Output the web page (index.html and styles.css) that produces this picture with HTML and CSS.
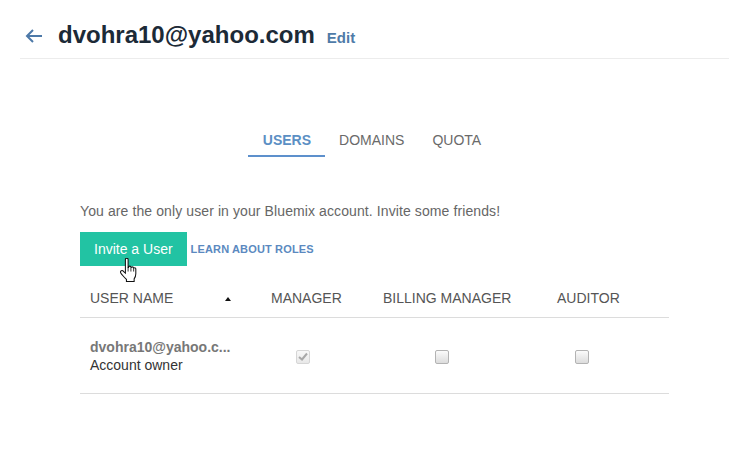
FILE: index.html
```html
<!DOCTYPE html>
<html lang="en">
<head>
    <meta charset="UTF-8">
    <title>dvohra10@yahoo.com - Account</title>
    <link rel="stylesheet" href="styles.css">
</head>
<body>
    <div class="topbar">
        <svg class="back" width="18" height="14" viewBox="0 0 18 14">
            <path d="M17 7H2M8 1L2 7l6 6" fill="none" stroke="#4d79a8" stroke-width="2"/>
        </svg>
        <h1 class="title">dvohra10@yahoo.com</h1>
        <a class="edit" href="#">Edit</a>
    </div>

    <div class="main">
        <nav class="tabs">
            <a class="tab active" href="#">USERS</a>
            <a class="tab" href="#">DOMAINS</a>
            <a class="tab" href="#">QUOTA</a>
        </nav>

        <div class="content">
            <p class="message">You are the only user in your Bluemix account. Invite some friends!</p>

            <div class="actions">
                <button type="button" class="invite">Invite a User</button>
                <a class="roles" href="#">LEARN ABOUT ROLES</a>
                <svg class="cursor" width="20" height="25" viewBox="0 0 18 24">
                    <path d="M6.5 1.5c0-.8.6-1.3 1.3-1.3s1.3.5 1.3 1.3V9h.4c0-.8.6-1.2 1.2-1.2s1.2.4 1.2 1.2v.6c0-.7.6-1.1 1.2-1.1s1.2.4 1.2 1.1v.7c0-.6.6-1 1.1-1s1.1.4 1.1 1V15c0 2.2-.6 3.6-1.6 5v2.5H7.5v-2C6 19 3.5 16.5 2.2 14.6c-.7-1-.4-2 .4-2.4.8-.4 1.6 0 2.3.9l1.6 1.4z" fill="#fff" stroke="#111" stroke-width="1"/>
                    <path d="M9.1 9v4M11.8 9.6v3.4M14.4 10.3v2.7" fill="none" stroke="#111" stroke-width=".8"/>
                </svg>
            </div>

            <div class="users">
                <div class="row head">
                    <div class="cell sortable">USER NAME <span class="sort"></span></div>
                    <div class="cell">MANAGER</div>
                    <div class="cell">BILLING MANAGER</div>
                    <div class="cell">AUDITOR</div>
                </div>
                <div class="row">
                    <div class="cell user">
                        <span class="user-name">dvohra10@yahoo.c...</span>
                        <span class="user-role">Account owner</span>
                    </div>
                    <div class="cell check-manager">
                        <span class="checkbox checked">
                            <svg width="10" height="9" viewBox="0 0 10 9"><path d="M1 5l3 2.5L9 1.5" fill="none" stroke="#a8a8a8" stroke-width="2"/></svg>
                        </span>
                    </div>
                    <div class="cell check-billing"><span class="checkbox"></span></div>
                    <div class="cell check-auditor"><span class="checkbox"></span></div>
                </div>
            </div>
        </div>
    </div>
</body>
</html>
```

FILE: styles.css
```css
body {
    margin: 0;
    font-family: "Liberation Sans", Arial, sans-serif;
    background-color: #fff;
    color: #333;
}
a {
    text-decoration: none;
}
.topbar {
    margin-left: 20px;
    height: 59px;
    padding: 21px 0 0 5px;
    box-sizing: border-box;
    border-bottom: 1px solid #ececec;
    display: flex;
    align-items: baseline;
}
.back {
    margin-right: 15px;
}
.title {
    margin: 0;
    font-size: 24px;
    line-height: 28px;
    font-weight: bold;
    color: #1c2a37;
}
.edit {
    margin-left: 12px;
    font-size: 15px;
    font-weight: bold;
    color: #4f7ba8;
}
.main {
    margin-left: 20px;
}
.tabs {
    margin-top: 63px;
    display: flex;
    justify-content: center;
    padding-right: 6px;
}
.tab {
    padding: 10px 14px 6px;
    font-size: 14px;
    line-height: 17px;
    color: #6a6a6a;
    border-bottom: 2px solid transparent;
}
.tab.active {
    padding: 10px 14px 6px 15px;
    font-weight: bold;
    color: #5b8fc4;
    border-bottom-color: #5d90cc;
}
.content {
    width: 589px;
    margin: 0 auto;
}
.message {
    margin: 45px 0 0;
    font-size: 14px;
    line-height: 18px;
    letter-spacing: 0.1px;
    color: #666;
}
.actions {
    position: relative;
    margin-top: 12px;
    display: flex;
    align-items: center;
}
.invite {
    height: 34px;
    padding: 0 14px;
    border: 0;
    background-color: #22c3a3;
    color: #fff;
    font-family: inherit;
    font-size: 14px;
}
.roles {
    margin-left: 4px;
    font-size: 11px;
    font-weight: bold;
    letter-spacing: 0.15px;
    color: #5b89c0;
}
.cursor {
    position: absolute;
    left: 38px;
    top: 26px;
}
.users {
    margin-top: 14px;
}
.row {
    display: grid;
    grid-template-columns: 181px 112px 174px 122px;
    border-bottom: 1px solid #dcdcdc;
}
.cell {
    padding: 9px 10px;
    font-size: 14px;
    line-height: 19px;
    color: #555;
}
.sortable {
    display: flex;
    justify-content: space-between;
    align-items: center;
    padding-right: 30px;
}
.sort {
    width: 0;
    height: 0;
    border-left: 3px solid transparent;
    border-right: 3px solid transparent;
    border-bottom: 4px solid #111;
}
.row:not(.head) {
    height: 75px;
    align-items: center;
}
.row:not(.head) .cell {
    padding-top: 0;
    padding-bottom: 0;
}
.user {
    display: flex;
    flex-direction: column;
    line-height: 18px;
}
.user-name {
    font-weight: bold;
    color: #777;
}
.user-role {
    color: #333;
}
.check-manager {
    padding-left: 35px !important;
}
.check-billing {
    padding-left: 62px !important;
}
.check-auditor {
    padding-left: 28px !important;
}
.checkbox {
    display: flex;
    align-items: center;
    justify-content: center;
    width: 14px;
    height: 14px;
    box-sizing: border-box;
    margin-top: 2px;
    border: 1px solid #b3b3b3;
    border-radius: 2px;
    background: linear-gradient(#fbfbfb, #dcdcdc);
}
.checkbox.checked {
    border-color: #d6d6d6;
    background: linear-gradient(#f8f8f8, #e8e8e8);
}
```
